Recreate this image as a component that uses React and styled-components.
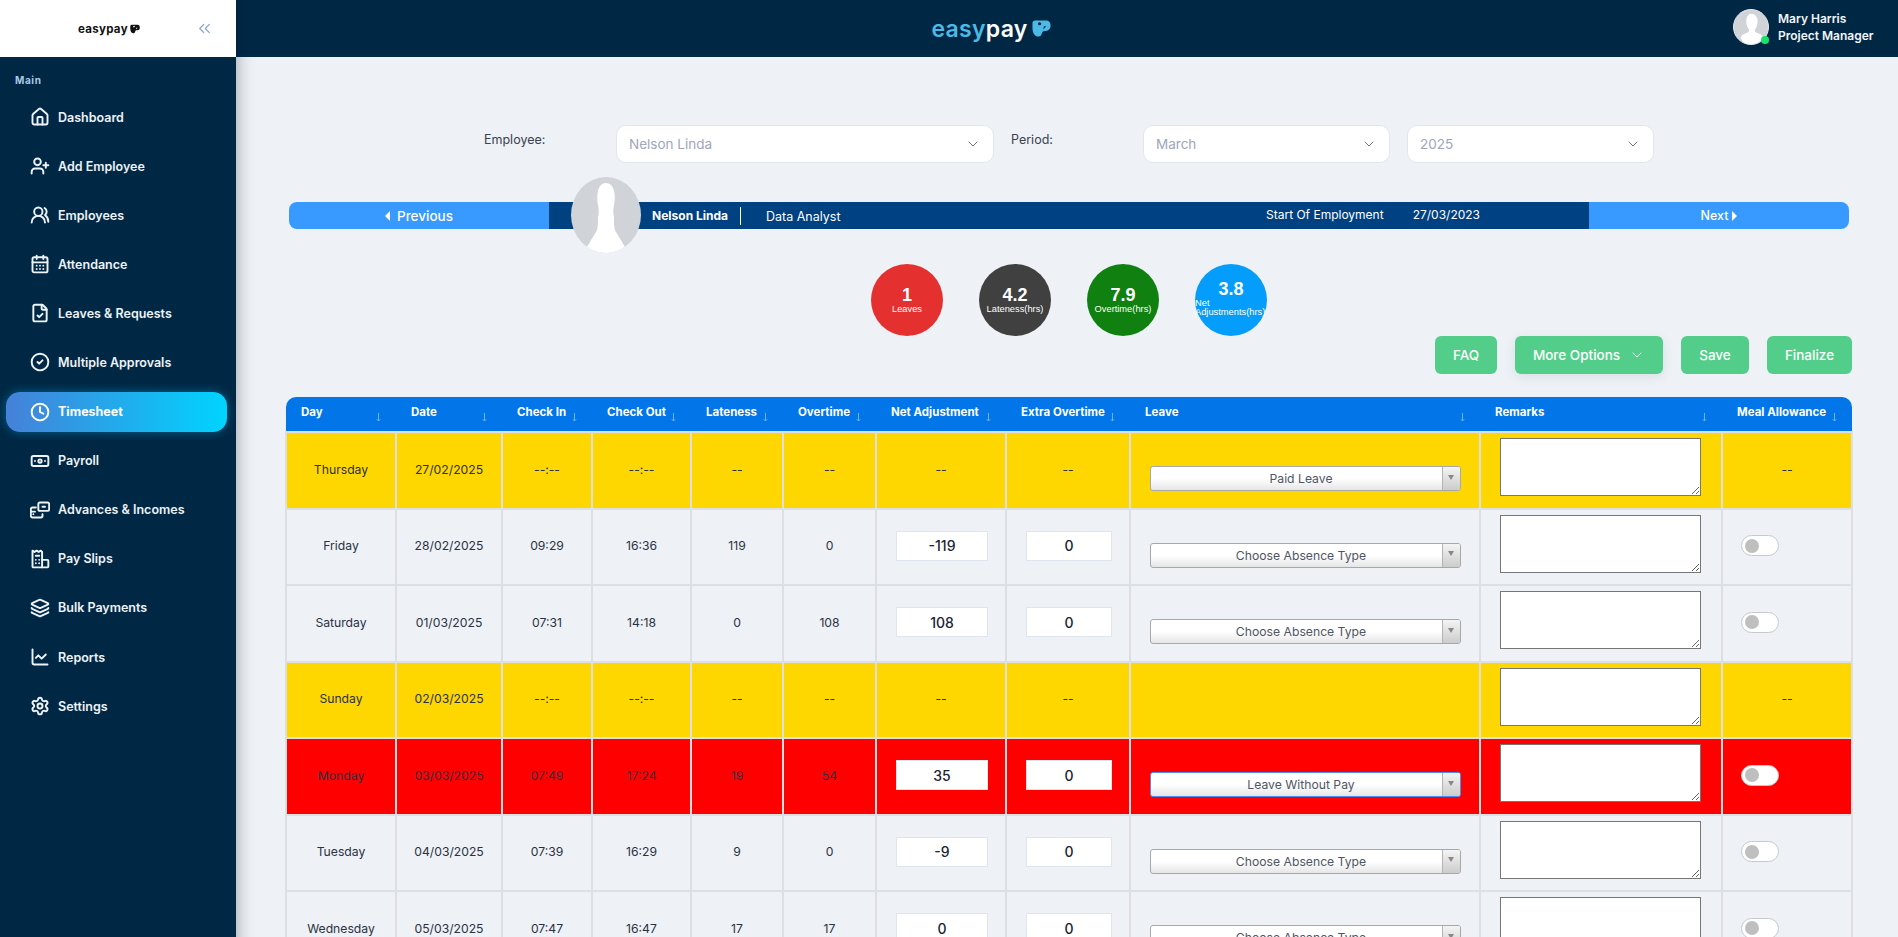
import React from 'react';
import styled, { createGlobalStyle } from 'styled-components';
import {
  House, UserPlus, UsersRound, CalendarDays, FileCheck, CircleCheck, Clock, Banknote,
  Layers, ChartLine, Settings, ChevronDown, ChevronsLeft,
} from 'lucide-react';

const GlobalStyle = createGlobalStyle`
  * { box-sizing: border-box; }
  html, body { margin: 0; height: 100%; overflow: hidden; }
  body { font-family: Inter, "Noto Sans", sans-serif; background: #eef2f6; color: #333a4d; }
`;

const Page = styled.div`
  display: grid;
  grid-template-columns: 236px 1fr;
  height: 937px;
  overflow: hidden;
`;

const Sidebar = styled.aside`
  background: #002845;
  position: relative;
  z-index: 2;
  box-shadow: 0 0 16px rgba(0, 20, 40, 0.38);
`;

const SideLogo = styled.div`
  height: 57px;
  background: #fff;
  display: flex;
  align-items: center;
  padding-left: 78px;
  gap: 2px;
  color: #111;
  font-size: 11.5px;
  font-weight: 700;
  letter-spacing: 0.3px;
`;

const Collapse = styled.span`
  margin-left: auto;
  margin-right: 22px;
  display: flex;
  color: #8fa9cf;
`;

const SideLabel = styled.div`
  padding: 17px 0 0 15px;
  height: 40px;
  font-size: 10px;
  font-weight: 700;
  letter-spacing: 0.6px;
  color: #a9cbe8;
`;

const Nav = styled.nav`
  display: flex;
  flex-direction: column;
  gap: 9.1px;
  padding: 0 9px 0 6px;
`;

const NavItem = styled.a`
  height: 40px;
  display: flex;
  align-items: center;
  gap: 8px;
  padding-left: 24px;
  border-radius: 14px;
  font-size: 12.5px;
  font-weight: ${p => (p.$active ? 700 : 600)};
  color: ${p => (p.$active ? '#fff' : '#eef3f7')};
  background: ${p => (p.$active ? 'linear-gradient(90deg, #4581d8, #00d4ff)' : 'transparent')};
  box-shadow: ${p => (p.$active ? '0 0 10px rgba(0, 190, 255, 0.4)' : 'none')};
  svg { width: 20px; height: 20px; flex: none; stroke-width: 2.3; }
`;

const Main = styled.div`
  min-width: 0;
  display: flex;
  flex-direction: column;
`;

const Topbar = styled.header`
  height: 57px;
  flex: none;
  background: #002845;
  display: flex;
  align-items: center;
  position: relative;
  justify-content: center;
`;

const BigLogo = styled.div`
  display: flex;
  align-items: center;
  gap: 4px;
  margin-right: 152px;
  font-size: 23px;
  font-weight: 600;
  letter-spacing: 0.3px;
  color: #fff;
  span { color: #4cb9e6; }
`;

const Profile = styled.div`
  position: absolute;
  left: 1497px;
  top: 9px;
  display: flex;
  align-items: center;
  gap: 9px;
`;

const ProfilePic = styled.div`
  width: 36px;
  height: 36px;
  border-radius: 50%;
  position: relative;
  border: 1px solid #e8e8e8;
  background: #d0d3d8;
  &::after {
    content: '';
    position: absolute;
    right: -1px;
    bottom: 0;
    width: 8px;
    height: 8px;
    border-radius: 50%;
    background: #19e36b;
  }
  svg { display: block; width: 100%; height: 100%; border-radius: 50%; }
`;

const ProfileText = styled.div`
  font-size: 12px;
  font-weight: 600;
  line-height: 17px;
  color: #f2f5f8;
`;

const Content = styled.main`
  flex: 1;
  padding: 68px 46px 0 50px;
  min-height: 0;
`;

const Filters = styled.div`
  display: flex;
  padding-left: 198px;
  height: 38px;
`;

const FilterLabel = styled.label`
  width: ${p => p.$w}px;
  margin-left: ${p => p.$ml || 0}px;
  padding-top: 7px;
  font-size: 12.5px;
  color: #3a4150;
`;

const Picker = styled.div`
  width: ${p => p.$w}px;
  margin-left: ${p => p.$ml || 0}px;
  background: #fff;
  border: 1px solid #e2e7ee;
  border-radius: 10px;
  display: flex;
  align-items: center;
  justify-content: space-between;
  padding: 0 12px;
  font-size: 13.5px;
  color: #9fa5ba;
  svg { color: #6b7285; }
`;

const Bar = styled.div`
  margin: 39px 3px 0;
  height: 27px;
  display: flex;
  position: relative;
  color: #fff;
  font-size: 12.5px;
`;

const BarButton = styled.div`
  width: 260px;
  flex: none;
  background: #3899ff;
  display: flex;
  align-items: center;
  justify-content: center;
  gap: ${p => (p.$side === 'left' ? 7 : 4)}px;
  font-weight: 500;
  font-size: ${p => (p.$side === 'left' ? 13.5 : 12.5)}px;
  border-radius: ${p => (p.$side === 'left' ? '8px 0 0 8px' : '0 8px 8px 0')};
`;

const Triangle = styled.i`
  width: 0;
  height: 0;
  border-top: 5px solid transparent;
  border-bottom: 5px solid transparent;
  ${p => (p.$side === 'left' ? 'border-right: 5px solid #fff;' : 'border-left: 5px solid #fff;')}
`;

const BarCenter = styled.div`
  flex: 1;
  display: flex;
  align-items: center;
  background: #004181;
  padding: 2px 109px 0 103px;
`;

const BarAvatar = styled.div`
  position: absolute;
  left: 282px;
  top: -25px;
  width: 70px;
  height: 76px;
  border-radius: 50%;
  overflow: hidden;
  background: #d0d3d8;
  svg { display: block; width: 100%; height: 100%; }
`;

const BarName = styled.strong`
  font-weight: 700;
  font-size: 12px;
  padding-right: 12px;
  border-right: 1px solid #fff;
  line-height: 18px;
  margin-top: -2px;
`;

const BarRole = styled.span`
  margin-left: 25px;
`;

const BarDates = styled.div`
  margin-left: auto;
  display: flex;
  gap: 29px;
  margin-top: -4px;
  font-size: 12px;
`;

const Bubbles = styled.div`
  display: flex;
  justify-content: center;
  gap: 36px;
  margin-top: 35px;
`;

const Bubble = styled.div`
  width: 72px;
  height: 72px;
  border-radius: 50%;
  background: ${p => p.$color};
  color: #fff;
  font-family: "Liberation Sans", Arial, sans-serif;
  display: flex;
  flex-direction: column;
  align-items: center;
  justify-content: center;
  padding-bottom: ${p => (p.$up ? 4 : 0)}px;
  b { font-size: 18px; line-height: 18px; }
  span { font-size: 9.3px; line-height: 9px; margin-top: 1px; align-self: ${p => (p.$up ? 'stretch' : 'center')}; }
`;

const Actions = styled.div`
  display: flex;
  justify-content: flex-end;
  gap: 18px;
`;

const ActionButton = styled.button`
  width: ${p => p.$w}px;
  height: 38px;
  border: 0;
  border-radius: 6px;
  background: #53ce8a;
  color: #fff;
  font: 500 13.5px Inter, sans-serif;
  display: flex;
  align-items: center;
  justify-content: center;
  gap: 9px;
  box-shadow: ${p => (p.$raised ? '0 3px 12px rgba(30, 60, 90, 0.1)' : 'none')};
`;

const Table = styled.table`
  margin: 23px 0 0 -1px;
  width: 1566px;
  table-layout: fixed;
  border-collapse: collapse;
  font-size: 12.2px;
`;

const HeadCell = styled.th`
  height: 35px;
  padding: 1px 15px 0 15px;
  background: #0275e8;
  color: #fff;
  font-size: 11.5px;
  font-weight: 700;
  text-align: left;
  &:first-child { border-top-left-radius: 10px; }
  &:last-child { border-top-right-radius: 10px; }
`;

const HeadInner = styled.div`
  display: flex;
  justify-content: space-between;
  align-items: flex-start;
  height: 21px;
  line-height: 17px;
  white-space: nowrap;
  svg { flex: none; margin-top: 9px; color: #71b2f3; }
`;

const tones = { yellow: '#ffd700', red: '#ff0000', plain: '#eef2f6' };

const Row = styled.tr`
  td { background: ${p => tones[p.$tone]}; }
`;

const Cell = styled.td`
  height: 76.5px;
  padding: 0 0 2px;
  border: 2px solid #dddfe2;
  text-align: center;
  vertical-align: middle;
  color: #2b3142;
`;

const TextCell = styled(Cell)`
  vertical-align: top;
  padding: 5px 1px 0 0;
`;

const AmountInput = styled.input`
  width: ${p => p.$w}px;
  height: 30px;
  border: 1px solid #dfe5ef;
  background: #fff;
  text-align: center;
  font: 500 14px Inter, sans-serif;
  color: #1c2333;
  padding: 0;
  outline: none;
  display: block;
  margin: 0 auto;
  position: relative;
  left: 1px;
`;

const LeavePicker = styled.div`
  width: 311px;
  height: 25px;
  margin: 0 auto;
  display: flex;
  border: 1px solid ${p => (p.$focus ? '#4c8df5' : '#a8a8a8')};
  border-radius: 3px;
  overflow: hidden;
  background: linear-gradient(#fff 50%, #e6e6e6);
  font-size: 12.2px;
  color: #505563;
`;

const LeaveCell = styled(Cell)`
  vertical-align: top;
  padding: 33px 0 0;
`;

const LeaveValue = styled.span`
  flex: 1;
  line-height: 23px;
  text-align: center;
  padding-left: 10px;
`;

const LeaveArrow = styled.span`
  width: 18px;
  flex: none;
  border-left: 1px solid #b4b4b4;
  background: linear-gradient(#f4f4f4, #cccccc);
  display: flex;
  align-items: center;
  justify-content: center;
  padding-bottom: 3px;
  &::before {
    content: '';
    border-top: 5px solid #888;
    border-left: 3px solid transparent;
    border-right: 3px solid transparent;
  }
`;

const Remarks = styled.textarea`
  display: block;
  width: 201px;
  height: 58px;
  margin: 0 auto;
  background: #fff;
  border: 1px solid #767676;
  outline: none;
`;

const Toggle = styled.div`
  width: 38px;
  height: 21px;
  margin-left: 18px;
  border: 1.5px solid #c5c9ce;
  border-radius: 11px;
  background: #fff;
  display: flex;
  align-items: center;
  padding-left: 3px;
  &::before {
    content: '';
    width: 14px;
    height: 14px;
    border-radius: 50%;
    background: #bfbfbf;
  }
`;

const Person = () => (
  <svg viewBox="0 0 70 76" preserveAspectRatio="none">
    <path d="M35 6c4 0 7 3 8 8 1 4 1 9 0 14-1 5-1 8 0 12 0 7 0 12 2 15 2 3 6 10 9 15v8H16v-8c3-5 7-12 9-15 2-3 2-8 2-15 1-4 1-7 0-12-1-5-1-10 0-14 1-5 4-8 8-8z" fill="#fff" />
  </svg>
);

const ProfilePerson = () => (
  <svg viewBox="0 0 36 36">
    <path d="M18 4c4.500 0 7 3.500 7 8 0 4-1.500 7-3 9 0 2 1 3 4 4 3 1 5 3 5 5l-4 6H11l-4-6c0-2 2-4 5-5 3-1 4-2 4-4-1.500-2-3-5-3-9 0-4.500 2.500-8 5-8z" fill="#fff" />
  </svg>
);

const LogoMark = ({ size, fill, dot }) => (
  <svg width={size} height={size} viewBox="0 0 20 20">
    <path d="M3.500 1.500H15a4.500 4.500 0 0 1 4.500 4.500v1.500a5 5 0 0 1-5 5h-1.500c-1.500 0-2.200 1-2.600 2.500-.6 2.300-1.700 3.500-3.400 3.500C3 18.500.5 15 .5 9.500V4.500a3 3 0 0 1 3-3z" fill={fill} />
    <circle cx="8" cy="5" r="1.700" fill={dot} />
    <path d="M12.500 7.500l2.500 0-3 3.500z" fill={dot} />
  </svg>
);

const CardsIcon = () => (
  <svg viewBox="0 0 24 24" fill="none" stroke="currentColor" strokeWidth="2" strokeLinecap="round" strokeLinejoin="round">
    <rect x="10" y="3" width="13" height="10" rx="2" />
    <path d="M15 8h3" />
    <path d="M7 9H3a2 2 0 0 0-2 2v8a2 2 0 0 0 2 2h10a2 2 0 0 0 2-2v-2" />
    <path d="M4 17h.01M1 14h5" />
  </svg>
);

const SlipIcon = () => (
  <svg viewBox="0 0 24 24" fill="none" stroke="currentColor" strokeWidth="2" strokeLinecap="round" strokeLinejoin="round">
    <path d="M3 2l2.500 1.500L8 2l2.500 1.500L13 2l1.500 1.500V22H4a1 1 0 0 1-1-1z" />
    <path d="M14.500 13H21a1 1 0 0 1 1 1v7a1 1 0 0 1-1 1h-6.500" />
    <path d="M7 8h4M7 13h.01M11 13h.01M7 17h.01M11 17h.01" />
  </svg>
);

const SortArrow = () => (
  <svg width="5" height="9" viewBox="0 0 5 9" fill="none" stroke="currentColor" strokeWidth="1">
    <path d="M2.500 0v8M.8 6.300L2.500 8l1.700-1.700" />
  </svg>
);

const navItems = [
  ['Dashboard', <House key="i" />],
  ['Add Employee', <UserPlus key="i" />],
  ['Employees', <UsersRound key="i" />],
  ['Attendance', <CalendarDays key="i" />],
  ['Leaves & Requests', <FileCheck key="i" />],
  ['Multiple Approvals', <CircleCheck key="i" />],
  ['Timesheet', <Clock key="i" />, true],
  ['Payroll', <Banknote key="i" />],
  ['Advances & Incomes', <CardsIcon key="i" />],
  ['Pay Slips', <SlipIcon key="i" />],
  ['Bulk Payments', <Layers key="i" />],
  ['Reports', <ChartLine key="i" />],
  ['Settings', <Settings key="i" />],
];

const columns = [
  ['Day', 110], ['Date', 106], ['Check In', 90], ['Check Out', 99], ['Lateness', 92], ['Overtime', 93],
  ['Net Adjustment', 130], ['Extra Overtime', 124], ['Leave', 350], ['Remarks', 242], ['Meal Allowance', 130],
];

const ABSENCE = 'Choose Absence Type';
const rows = [
  { tone: 'yellow', values: ['Thursday', '27/02/2025', '--:--', '--:--', '--', '--'], leave: 'Paid Leave' },
  { tone: 'plain', values: ['Friday', '28/02/2025', '09:29', '16:36', '119', '0'], adj: '-119', extra: '0', leave: ABSENCE },
  { tone: 'plain', values: ['Saturday', '01/03/2025', '07:31', '14:18', '0', '108'], adj: '108', extra: '0', leave: ABSENCE },
  { tone: 'yellow', values: ['Sunday', '02/03/2025', '--:--', '--:--', '--', '--'] },
  { tone: 'red', values: ['Monday', '03/03/2025', '07:49', '17:24', '19', '54'], adj: '35', extra: '0', leave: 'Leave Without Pay', focus: true },
  { tone: 'plain', values: ['Tuesday', '04/03/2025', '07:39', '16:29', '9', '0'], adj: '-9', extra: '0', leave: ABSENCE },
  { tone: 'plain', values: ['Wednesday', '05/03/2025', '07:47', '16:47', '17', '17'], adj: '0', extra: '0', leave: ABSENCE },
];

const App = () => {
  return (
    <Page>
      <GlobalStyle />
      <Sidebar>
        <SideLogo>
          easypay
          <LogoMark size={10} fill="#111" dot="#fff" />
          <Collapse><ChevronsLeft size={19} strokeWidth={1.6} /></Collapse>
        </SideLogo>
        <SideLabel>Main</SideLabel>
        <Nav>
          {navItems.map(([label, icon, active]) => (
            <NavItem key={label} $active={active}>{icon}{label}</NavItem>
          ))}
        </Nav>
      </Sidebar>
      <Main>
        <Topbar>
          <BigLogo>
            <div><span>easy</span>pay</div>
            <LogoMark size={19} fill="#4cb9e6" dot="#002845" />
          </BigLogo>
          <Profile>
            <ProfilePic><ProfilePerson /></ProfilePic>
            <ProfileText>Mary Harris<br />Project Manager</ProfileText>
          </Profile>
        </Topbar>
        <Content>
          <Filters>
            <FilterLabel $w={132}>Employee:</FilterLabel>
            <Picker $w={378}>Nelson Linda<ChevronDown size={16} strokeWidth={1.5} /></Picker>
            <FilterLabel $w={132} $ml={17}>Period:</FilterLabel>
            <Picker $w={247}>March<ChevronDown size={16} strokeWidth={1.5} /></Picker>
            <Picker $w={247} $ml={17}>2025<ChevronDown size={16} strokeWidth={1.5} /></Picker>
          </Filters>
          <Bar>
            <BarButton $side="left"><Triangle $side="left" />Previous</BarButton>
            <BarAvatar><Person /></BarAvatar>
            <BarCenter>
              <BarName>Nelson Linda</BarName>
              <BarRole>Data Analyst</BarRole>
              <BarDates><span>Start Of Employment</span><span>27/03/2023</span></BarDates>
            </BarCenter>
            <BarButton $side="right">Next<Triangle $side="right" /></BarButton>
          </Bar>
          <Bubbles>
            <Bubble $color="#e53030"><b>1</b><span>Leaves</span></Bubble>
            <Bubble $color="#404040"><b>4.2</b><span>Lateness(hrs)</span></Bubble>
            <Bubble $color="#108010"><b>7.9</b><span>Overtime(hrs)</span></Bubble>
            <Bubble $color="#049dfb" $up><b>3.8</b><span>Net Adjustments(hrs)</span></Bubble>
          </Bubbles>
          <Actions>
            <ActionButton $w={62}>FAQ</ActionButton>
            <ActionButton $w={148} $raised>More Options<ChevronDown size={16} strokeWidth={1.5} /></ActionButton>
            <ActionButton $w={68}>Save</ActionButton>
            <ActionButton $w={85}>Finalize</ActionButton>
          </Actions>
          <Table>
            <colgroup>
              {columns.map(([name, width]) => <col key={name} width={width} />)}
            </colgroup>
            <thead>
              <tr>
                {columns.map(([name]) => (
                  <HeadCell key={name}><HeadInner>{name}<SortArrow /></HeadInner></HeadCell>
                ))}
              </tr>
            </thead>
            <tbody>
              {rows.map(row => (
                <Row key={row.values[1]} $tone={row.tone}>
                  {row.values.map((value, i) => <Cell key={i}>{value}</Cell>)}
                  <Cell>{row.adj ? <AmountInput $w={92} readOnly value={row.adj} /> : '--'}</Cell>
                  <Cell>{row.extra ? <AmountInput $w={86} readOnly value={row.extra} /> : '--'}</Cell>
                  <LeaveCell>
                    {row.leave && (
                      <LeavePicker $focus={row.focus}>
                        <LeaveValue>{row.leave}</LeaveValue>
                        <LeaveArrow />
                      </LeavePicker>
                    )}
                  </LeaveCell>
                  <TextCell><Remarks /></TextCell>
                  <Cell>{row.adj ? <Toggle /> : '--'}</Cell>
                </Row>
              ))}
            </tbody>
          </Table>
        </Content>
      </Main>
    </Page>
  );
};

export default App;
